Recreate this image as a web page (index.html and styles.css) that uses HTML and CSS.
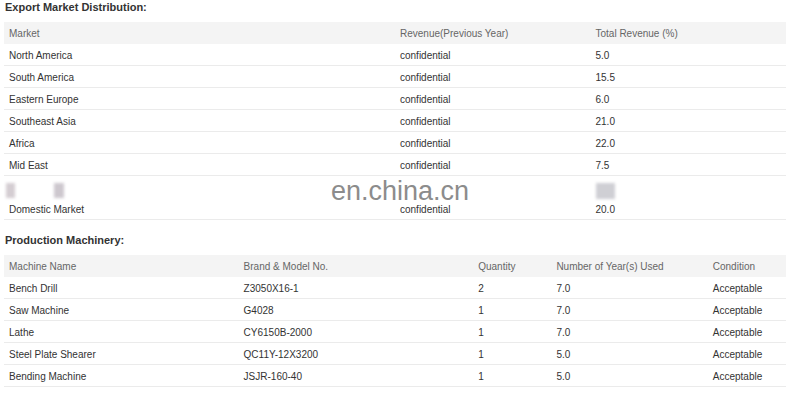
FILE: index.html
```html
<!DOCTYPE html>
<html>
<head>
<meta charset="utf-8">
<link rel="stylesheet" href="styles.css">
</head>
<body>
<div class="page">
  <h2 class="title">Export Market Distribution:</h2>
  <table class="grid market">
    <colgroup><col class="c50"><col class="c25"><col class="c25"></colgroup>
    <tr class="head"><td>Market</td><td>Revenue(Previous Year)</td><td>Total Revenue (%)</td></tr>
    <tr><td>North America</td><td>confidential</td><td>5.0</td></tr>
    <tr><td>South America</td><td>confidential</td><td>15.5</td></tr>
    <tr><td>Eastern Europe</td><td>confidential</td><td>6.0</td></tr>
    <tr><td>Southeast Asia</td><td>confidential</td><td>21.0</td></tr>
    <tr><td>Africa</td><td>confidential</td><td>22.0</td></tr>
    <tr><td>Mid East</td><td>confidential</td><td>7.5</td></tr>
    <tr class="tall">
      <td><div class="smudges"><span class="sm sm1"></span><span class="sm sm2"></span></div>Domestic Market</td>
      <td><div class="smudges"></div>confidential</td>
      <td><div class="smudges"><span class="sm sm3"></span></div>20.0</td>
    </tr>
  </table>
  <h2 class="title title2">Production Machinery:</h2>
  <table class="grid machines">
    <colgroup><col class="c30"><col class="c30"><col class="c10"><col class="c20"><col class="c10"></colgroup>
    <tr class="head"><td>Machine Name</td><td>Brand &amp; Model No.</td><td>Quantity</td><td>Number of Year(s) Used</td><td>Condition</td></tr>
    <tr><td>Bench Drill</td><td>Z3050X16-1</td><td>2</td><td>7.0</td><td>Acceptable</td></tr>
    <tr><td>Saw Machine</td><td>G4028</td><td>1</td><td>7.0</td><td>Acceptable</td></tr>
    <tr><td>Lathe</td><td>CY6150B-2000</td><td>1</td><td>7.0</td><td>Acceptable</td></tr>
    <tr><td>Steel Plate Shearer</td><td>QC11Y-12X3200</td><td>1</td><td>5.0</td><td>Acceptable</td></tr>
    <tr><td>Bending Machine</td><td>JSJR-160-40</td><td>1</td><td>5.0</td><td>Acceptable</td></tr>
  </table>
  <div class="watermark">en.china.cn</div>
</div>
</body>
</html>
```

FILE: styles.css
```css
html, body {
  margin: 0;
  padding: 0;
  background: #fff;
}
.page {
  position: relative;
  width: 800px;
  height: 400px;
  padding: 0 14px 0 4px;
  box-sizing: border-box;
  font-family: "Liberation Sans", Arial, sans-serif;
  color: #333;
}
.title {
  margin: 0;
  padding: 0 0 0 1px;
  height: 22px;
  line-height: 14px;
  font-size: 11px;
  font-weight: bold;
  color: #333;
}
.title2 {
  height: 35px;
  line-height: 41px;
}
.grid {
  width: 782px;
  border-collapse: collapse;
  table-layout: fixed;
  font-size: 10px;
}
.grid td {
  height: 20px;
  padding: 1px 5px 0;
  border-bottom: 1px solid #ebebeb;
  white-space: nowrap;
  vertical-align: middle;
  color: #333;
}
.grid tr.head td {
  background: #f4f4f4;
  color: #666;
  border-bottom: 0;
  height: 22px;
  padding-top: 0;
}
.c50 { width: 50%; }
.c25 { width: 25%; }
.c30 { width: 30%; }
.c20 { width: 20%; }
.c10 { width: 10%; }
.grid tr.tall td {
  height: 38px;
  vertical-align: bottom;
  padding-bottom: 4px;
}
.smudges {
  height: 18px;
  position: relative;
}
.sm {
  position: absolute;
  top: -3px;
  width: 9px;
  height: 15px;
  background: #d4cdd2;
  filter: blur(1.5px);
}
.sm1 { left: -3px; }
.sm2 { left: 45px; background: #cdc7ce; width: 10px; }
.sm3 { left: 0; width: 19px; height: 16px; background: #cfcfd4; }
.watermark {
  position: absolute;
  left: 331px;
  top: 176px;
  font-family: "Liberation Sans", Arial, sans-serif;
  font-size: 27px;
  color: #8c8c8c;
}
```
